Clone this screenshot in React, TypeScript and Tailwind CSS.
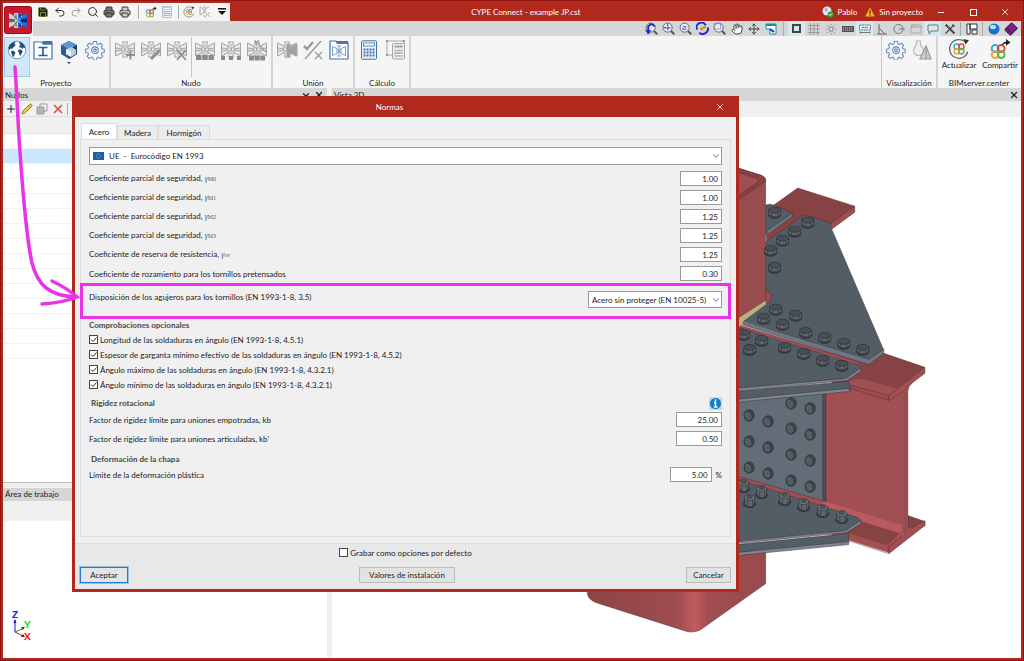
import type { ReactNode } from "react";
import {
  AppWindow,
  Book,
  ChevronDown,
  Hand,
  Move,
  Pencil,
  Plus,
  Printer,
  Redo2,
  Save,
  Search,
  Undo2,
  X,
} from "lucide-react";

type IconProps = { className?: string };

// ---------- Icons ----------

// Bolted joint: two flared beams meeting at a column
function Joint({ children, color = "#a6a6a6" }: { children?: ReactNode; color?: string }) {
  return (
    <svg viewBox="0 0 22 22" className="size-[22px]" fill="none" stroke={color} strokeWidth="1">
      <path d="M8 2h6M9 2v4M13 2v4M8 17h6M9 13v4M13 13v4" />
      <path d="M1.500 3L8 6v7l-6.500 3zM20.500 3L14 6v7l6.500 3zM1.500 8L8 9M1.500 11L8 10M20.500 8L14 9M20.500 11L14 10" fill="#e6e6e6" />
      <path d="M8 6l6 7M14 6l-6 7M11 4v11" />
      {children}
    </svg>
  );
}

function Gear({ className = "size-5" }: IconProps) {
  return (
    <svg viewBox="0 0 24 24" className={className} fill="none" stroke="#5f89b8" strokeWidth="1.300" strokeLinejoin="round">
      <path d="M10 1.500h4l.6 3 1.900.8 2.600-1.800 2.800 2.800-1.800 2.600.8 1.900 3 .6v4l-3 .6-.8 1.900 1.800 2.600-2.800 2.800-2.600-1.800-1.900.8-.6 3h-4l-.6-3-1.900-.8-2.600 1.800-2.800-2.800 1.800-2.600-.8-1.900-3-.6v-4l3-.6.8-1.900-1.800-2.600 2.800-2.800 2.600 1.800 1.900-.8z" transform="translate(.6 .4) scale(.94)" />
      <circle cx="12" cy="12.200" r="4" />
      <circle cx="12" cy="12.200" r="1.600" />
    </svg>
  );
}

function Globe() {
  return (
    <svg viewBox="0 0 20 20" className="size-5">
      <circle cx="10" cy="10" r="8.800" fill="#fff" stroke="#2a5a8c" strokeWidth=".6" />
      <path
        d="M1.500 8Q2.500 4 6 2.300L8.500 2 7.500 4 8.800 5.300 6.500 7 5.500 8.800 3.500 8.500 2.800 10.500zM4 10.800L6.500 10.800 8.500 12.500 7.500 14.500 7 17 5.500 16 4.500 13.500zM12 1.800Q15 2 17.300 5.200L18.300 8.500 16.500 7.500 15.500 9 14 7.500 12.500 7.500 12 6.200 13.500 5 12.500 3.500zM11.500 9.800L14 9.500 15.800 11.200 14.500 13.500 13.500 16 12.300 14.500 12 12.500 10.800 11.500z"
        fill="#1d4d7e"
      />
    </svg>
  );
}

function SectionWindow() {
  return (
    <svg viewBox="0 0 20 20" className="size-5" fill="none" stroke="#4274a8">
      <path d="M1 2h8l1 2h9v15H1z" fill="#fff" strokeWidth="1.200" />
      <path d="M10 1.500h9V4h-8.500z" fill="#4274a8" />
      <path d="M5.500 7.500h9M5.500 15.500h9M10 7.500v8" stroke="#2b5c90" strokeWidth="1.700" />
    </svg>
  );
}

function JointWindow() {
  return (
    <svg viewBox="0 0 20 20" className="size-5" fill="none" stroke="#7da0c6">
      <path d="M1 1h6l1 2h11v16H1z" fill="#fff" stroke="#4274a8" strokeWidth="1.200" />
      <path d="M7.500 1H19v3H8.500z" fill="#5d6f9c" stroke="none" />
      <path d="M3.500 6.500l4.500 2v5l-4.500 2zM16.500 6.500l-4.500 2v5l4.500 2zM8 6h4M8 16h4M10 6v10M8 8.500l4 5M12 8.500l-4 5" />
    </svg>
  );
}

function Cube() {
  return (
    <svg viewBox="0 0 20 20" className="size-5">
      <path d="M10 1l8 4v9l-8 5-8-5V5z" fill="#2a5c96" />
      <path d="M10 1l8 4-8 4-8-4z" fill="#5f97c9" />
      <path d="M10 9l8-4v9l-8 5z" fill="#1b3f6b" />
      <path d="M7 9l6-2 4 3v4l-5 3-5-3z" fill="#b9cfe0" />
      <path d="M7 9l5 2v6l-5-3z" fill="#e8f0f6" />
    </svg>
  );
}

function Calculator({ className = "size-5", color = "#4274a8" }: IconProps & { color?: string }) {
  return (
    <svg viewBox="0 0 20 20" className={className} fill="none" stroke={color}>
      <rect x="2.500" y=".8" width="15" height="18.400" rx="1" fill="#eef3f8" />
      <rect x="4.500" y="3" width="11" height="3" strokeWidth=".8" fill="#fff" />
      <path d="M4.500 9.500h11M4.500 12.500h11M4.500 15.500h11" strokeWidth="2" strokeDasharray="2 1" />
    </svg>
  );
}

function MeshCalculator() {
  return (
    <svg viewBox="0 0 20 20" className="size-5" fill="none" stroke="#a5a5a5">
      <path d="M2 1v15M1 1h18v3M2 15h5" />
      <path d="M1 0h2v2H1zM18 0h2v2h-2zM1 14h2v2H1z" fill="#999" stroke="none" />
      <rect x="7.500" y="3.500" width="12" height="15.500" rx="1" fill="#eee" />
      <path d="M9.500 6.500h8" strokeWidth="2" />
      <path d="M9.500 10.500h8M9.500 13.200h8M9.500 16h8" strokeWidth="1.700" strokeDasharray="1.700 .5" />
    </svg>
  );
}

// Four coloured rings of BIMserver.center
function Rings() {
  return (
    <g fill="none" strokeWidth="1.800">
      <circle cx="7.200" cy="7.200" r="3.200" stroke="#35a7d8" />
      <circle cx="12.800" cy="7.200" r="3.200" stroke="#e2453c" />
      <circle cx="7.200" cy="12.800" r="3.200" stroke="#f3a32c" />
      <circle cx="12.800" cy="12.800" r="3.200" stroke="#5bb450" />
    </g>
  );
}

function RingsIcon({ mode, className = "size-5" }: IconProps & { mode: "sync" | "share" }) {
  return (
    <svg viewBox="0 0 20 20" className={className}>
      {mode === "sync" ? (
        <>
          <path d="M15.500 3.500a8.500 8.500 0 1 0 2.500 9" fill="none" stroke="#666" strokeWidth="1.100" />
          <path d="M14 1l5 1-3 4z" fill="#333" />
          <g transform="translate(2.500 2.500) scale(.75)">
            <Rings />
          </g>
        </>
      ) : (
        <>
          <g transform="translate(-1.500 2.500) scale(.98)">
            <Rings />
          </g>
          <path d="M11.500 7q1-3.500 4-3.500V1l4 3-4 3V5q-2 0-4 2z" fill="#222" />
        </>
      )}
    </svg>
  );
}

function BulbCone() {
  return (
    <svg viewBox="0 0 20 20" className="size-5" fill="none" stroke="#b8b8b8" strokeWidth="1.200">
      <path d="M4.500 1h4v3.500l2.500 4a5 5 0 1 1-9 0l2.500-4z" fill="#f0f0f0" />
      <path d="M14 6L8 19h11z" fill="#d0d0d0" stroke="#999" />
      <path d="M14 6v13" stroke="#999" />
    </svg>
  );
}

function Magnifier({ children }: { children?: ReactNode }) {
  return (
    <svg viewBox="0 0 12 12" className="size-[13px]" fill="none" stroke="#555" strokeWidth=".8">
      <circle cx="5.200" cy="5.200" r="4.200" fill="#eeeefa" />
      <path d="M8.300 8.300l3 3" strokeWidth="1.800" />
      {children}
    </svg>
  );
}

function AppLogo() {
  return (
    <svg viewBox="0 0 28 28" className="size-7">
      <rect x=".5" y=".5" width="27" height="27" rx="2" fill="#c51a2d" stroke="#8e0e1c" />
      <path d="M5 7l5 3V7h4v15h-4v-3l-5 3z" fill="#d4d4d4" />
      <path d="M23 7l-5 3V7h-4v15h4v-3l5 3z" fill="#1d6fe0" />
      <path d="M5 12.500l6 .8v2.400l-6 .8z" fill="#666" />
      <path d="M23 12.500l-6 .8v2.400l6 .8z" fill="#0c1f66" />
      <path d="M10 10l4 4.500-4 4.500M12 8v5M12 17v4" stroke="#555" fill="none" />
      <path d="M18 10l-4 4.500 4 4.500" stroke="#9fe0ff" fill="none" />
      <path d="M16 8v4M16 17v4" stroke="#0c1f66" />
    </svg>
  );
}

// ---------- Small controls ----------

function Tool({ label, active, children }: { label: string; active?: boolean; children: ReactNode }) {
  return (
    <button
      aria-label={label}
      className={`flex h-[15px] w-[17px] items-center justify-center ${active ? "bg-[#d5e9f3]" : ""}`}
    >
      {children}
    </button>
  );
}

function Divider({ className = "mx-1" }: IconProps) {
  return <span className={`h-3.5 w-px bg-[#aaa] ${className}`} />;
}

function RibbonButton({ label, active, children }: { label: string; active?: boolean; children: ReactNode }) {
  return (
    <button
      aria-label={label}
      className={`flex h-10 w-[26px] flex-col items-center border pt-0.5 ${
        active ? "border-[#9ccbe6] bg-[#cde8f6]" : "border-transparent"
      }`}
    >
      {children}
    </button>
  );
}

function RibbonGroup({ title, children }: { title: string; children: ReactNode }) {
  return (
    <section className="flex flex-col justify-between border-r-2 border-[#d4d4d4] px-px pt-px">
      <div className="flex">{children}</div>
      <h2 className="text-center leading-2.5">{title}</h2>
    </section>
  );
}

// ---------- 3D view ----------

function Bolt({ x, y, nut }: { x: number; y: number; nut?: boolean }) {
  return (
    <g transform={`translate(${x} ${y})`} stroke="#2a2f34" strokeWidth=".6">
      <ellipse cy="2.500" rx="6.300" ry="3.600" fill="#3a4046" />
      <path d={nut ? "M-5-4v6l3 3h5l2-3v-6z" : "M-6-2v4l3 2.500h6l3-2.500v-4z"} fill="#60666c" />
      <path d={nut ? "M-2-3v8M3-3v8" : "M-3 0v4M3 0v4"} />
      <ellipse cy={nut ? -4 : -2} rx={nut ? 5 : 6} ry="3" fill={nut ? "#72787e" : "#484e53"} />
      {nut && <ellipse cy="-4.500" rx="2.800" ry="1.600" fill="#50565c" />}
    </g>
  );
}

function WebBolt({ x, y }: { x: number; y: number }) {
  return (
    <g transform={`translate(${x} ${y})`} stroke="#2c3136" strokeWidth=".6">
      <ellipse cx=".5" rx="5.200" ry="5.800" fill="#3e444a" />
      <path d="M-4.500-2.500l3-2 4 2 1 5-3 3-4-2z" fill="#565c62" />
    </g>
  );
}

const topBolts = [
  [774, 212], [807, 222], [794, 231], [782, 240], [770, 250], [774, 267],
  [775, 309], [795, 315], [763, 318], [782, 324], [805, 332], [824, 337], [843, 343], [862, 349],
];
const midBolts = [[743, 334], [761, 340], [749, 349], [784, 347], [803, 353], [822, 360], [841, 365]];
const webBolts = [
  [748, 415], [748, 441], [748, 467], [767, 421], [767, 447], [767, 473],
  [790, 403], [790, 428], [790, 454], [790, 480], [809, 408], [809, 434], [809, 460], [809, 486],
];
const lowBolts = [[743, 486], [761, 492], [749, 501], [784, 499], [803, 505], [822, 511], [841, 517]];

function Model() {
  return (
    <svg
      viewBox="332 117 688 539"
      preserveAspectRatio="xMaxYMin meet"
      className="size-full"
      stroke="#4a3033"
      strokeWidth=".5"
      role="img"
      aria-label="Vista 3D"
    >
      <defs>
        <linearGradient id="column">
          <stop offset="0" stopColor="#8f4446" />
          <stop offset=".5" stopColor="#9e4b4e" />
          <stop offset=".6" stopColor="#c05c5f" />
          <stop offset=".68" stopColor="#a04d50" />
          <stop offset="1" stopColor="#984a4c" />
        </linearGradient>
      </defs>
      <path d="M587 550h178v33l-65 46q-8 4-16 1l-88-28q-8-3-9-9z" fill="url(#column)" />

      {/* rear beam and its plates */}
      <path d="M797 188l57 18-24 18-64 18v-32z" fill="#874244" />
      <path d="M854 206v6l-23 17-2-5z" fill="#9f4d50" />
      <path d="M765 205q4-2 8 0l19 8v3l-27 18z" fill="#535d66" />
      <path d="M792 213v3l-26 19v-4z" fill="#6b7886" />
      <path d="M765 242l35-25q4-3 8-1l20 6 3 7 52 121-15 11-126-41 23-18z" fill="#535d66" />
      <path d="M765 290l6 5-1 5-5 4z" fill="#9f4d50" />
      <path d="M735 323l4 2 129 39 15-11 41 14-36 28-160-40z" fill="#874244" />
      <path d="M743 321l125 38 15-10v4l-15 11-125-39z" fill="#6b7886" />

      {/* column */}
      <path d="M730 165l30 10q5 2 5 6v120l-35 26z" fill="#9a4d4f" stroke="none" />
      <path d="M730 166l30 9q6 2 5 6l-35 24z" fill="#874244" />
      <path d="M730 170l26 8q3 2 0 5l-26 18z" fill="#9f4d50" />
      <path d="M765 180v122" />
      <path d="M765 300l1 4-23 17-1 5-8 3v-9z" fill="#b9b082" />

      {/* front beam */}
      <path d="M822 388l37-10 45 12v142l-16 14-66-46z" fill="#a14f52" stroke="none" />
      <path d="M907 515l17 6v4l-17 7z" fill="#874244" />
      <path d="M834 381l54 14v5l-57-18z" fill="#9f4d50" />
      <path d="M735 472l125 39 44 16-4 14-12 11-58-18-95-30z" fill="#a34f52" stroke="none" />
      <path d="M855 516l44 16-12 13-42-13z" fill="#874244" stroke="none" />
      <path d="M822 500l80 25-2 8-78-24z" fill="#b95b5d" stroke="none" />
      <path
        d="M888 395l36-28v6l-12 9q-5 4-5 9v133q0 5 4 3l13-7v5l-36 28v-7l12-9q4-4 4-8V394q0-4-3-2l-13 8z"
        fill="#a34f52"
      />
      <path d="M832 535l56 18" />

      {/* middle plates */}
      <path d="M735 401l90-9v109l-90-26z" fill="#626d77" />
      <path d="M822 393l3 0v108l-3-1z" fill="#465260" />
      <path d="M735 391l113-10 2 9-115 11z" fill="#535d66" />
      <path d="M735 399l113-11 1 3-114 11z" fill="#7a8796" />
      <path d="M735 326l122 38q3 2 3 5l-14 9-111 11z" fill="#535d66" />
      <path d="M735 388l110-10 15-10v3l-14 9-111 11z" fill="#7a8796" />
      <path d="M739 326l118 37" stroke="#a34f52" strokeWidth="2" />

      {/* lower plates */}
      <path d="M735 544l113-11v9l-113 10z" fill="#535d66" />
      <path d="M735 552l113-11v3l-113 11z" fill="#7a8796" />
      <path d="M735 478l122 39q3 2 3 4l-14 9-111 11z" fill="#535d66" />
      <path d="M735 541l110-11 15-10v3l-14 9-111 11z" fill="#7a8796" />

      {topBolts.map(([x, y]) => (
        <Bolt key={`${x}-${y}`} x={x} y={y} />
      ))}
      {midBolts.map(([x, y]) => (
        <Bolt key={`${x}-${y}`} x={x} y={y} />
      ))}
      {webBolts.map(([x, y]) => (
        <WebBolt key={`${x}-${y}`} x={x} y={y} />
      ))}
      {lowBolts.map(([x, y]) => (
        <Bolt key={`${x}-${y}`} x={x} y={y} nut />
      ))}
    </svg>
  );
}

// ---------- Window header ----------

function TitleBar() {
  return (
    <div className="flex h-[18px] items-center bg-[#b1281c] text-white">
      <div className="flex h-full w-[197px] items-center bg-[#f5f5f5] pl-0.5 text-[#333]">
        <Tool label="Guardar"><Save className="size-3 fill-[#222] stroke-[#7f9440]" /></Tool>
        <Tool label="Deshacer"><Undo2 className="size-3" /></Tool>
        <Tool label="Rehacer"><Redo2 className="size-3 text-[#999]" /></Tool>
        <Tool label="Buscar"><Search className="size-3" /></Tool>
        <Tool label="Imprimir"><Printer className="size-3 fill-[#777]" /></Tool>
        <Tool label="Configurar impresión"><Printer className="size-3 fill-[#ccc]" /></Tool>
        <Divider />
        <Tool label="BIMserver"><RingsIcon mode="share" className="size-3" /></Tool>
        <Tool label="Calcular"><Calculator className="size-3" color="#7f9dbf" /></Tool>
        <Divider className="mx-0.5" />
        <Tool label="Actualizar"><RingsIcon mode="sync" className="size-3" /></Tool>
        <Tool label="Eliminar nudo">
          <svg viewBox="0 0 12 12" className="size-3" fill="none" stroke="#aaa">
            <path d="M1 1l4 2v4l-4 2zM10 1L6 3v4M4 1h3M4 10h2M6 6l5 5M11 6l-5 5" />
          </svg>
        </Tool>
        <Tool label="Más opciones">
          <svg viewBox="0 0 10 10" className="size-2.5" fill="#111">
            <path d="M1 1h8v1.500H1zM1 4h8L5 8z" />
          </svg>
        </Tool>
      </div>
      <h1 className="flex-1 text-center">CYPE Connect - example JP.cst</h1>
      <div className="flex items-center gap-1">
        <svg viewBox="0 0 12 12" className="size-3">
          <circle cx="5" cy="5" r="4.500" fill="#dfe9e8" />
          <path d="M2 3l3-1 1 2-2 2z" fill="#8fb7cf" />
          <circle cx="8.500" cy="8.500" r="3" fill="#35a547" />
          <path d="M7 8.500l1 1 2-2" stroke="#fff" fill="none" />
        </svg>
        <span>Pablo</span>
        <svg viewBox="0 0 12 12" className="ml-1 size-2.5">
          <path d="M6 .5L11.700 11.500H.3z" fill="#f8b51c" />
          <path d="M6 4v4M6 9v1.500" stroke="#222" strokeWidth="1.300" />
        </svg>
        <span>Sin proyecto</span>
      </div>
      <div className="ml-0.5 flex">
        <button aria-label="Minimizar" className="flex w-8 items-center justify-center">
          <span className="h-px w-1.5 bg-white" />
        </button>
        <button aria-label="Maximizar" className="flex w-8 items-center justify-center">
          <span className="size-[7px] border border-white" />
        </button>
        <button aria-label="Cerrar" className="flex w-8 items-center justify-center">
          <X className="size-2.5" />
        </button>
      </div>
    </div>
  );
}

function ViewTools() {
  return (
    <div className="flex h-[15px] items-center justify-end bg-[#d6d6d6] pr-0.5 text-[#444]">
      <Tool label="Zoom anterior">
        <Magnifier><path d="M3 11V4q3-4 6 0" stroke="#1a28e0" strokeWidth="1.800" /><path d="M0 7.500h6L3 11z" fill="#1a28e0" stroke="none" /></Magnifier>
      </Tool>
      <Tool label="Zoom total"><Magnifier><path d="M5.200 2v6.400M2 5.200h6.400" stroke="#3a46e0" strokeWidth="1.400" strokeDasharray="2 1" /></Magnifier></Tool>
      <Tool label="Zoom doble"><Magnifier><path d="M3.500 4h3v1.500h-3V7h3.500" stroke="#5a5ae0" /></Magnifier></Tool>
      <Tool label="Redibujar">
        <svg viewBox="0 0 12 12" className="size-[13px]" fill="none">
          <path d="M1 7a4 4 0 0 1 8-4M11 5a5 5 0 0 1-8 5" stroke="#1a28e0" strokeWidth="1.800" />
          <path d="M3 6l5-3 2 2-5 3z" fill="#d89a3c" />
        </svg>
      </Tool>
      <Tool label="Zoom ventana"><Magnifier><path d="M1 1.500h6v5H1z" stroke="#7c8fd8" /></Magnifier></Tool>
      <Tool label="Desplazar"><Hand className="size-3 fill-white" /></Tool>
      <Tool label="Orbitar"><Move className="size-3" /></Tool>
      <Tool label="Ventana">
        <svg viewBox="0 0 12 12" className="size-3" fill="#fff" stroke="#168fa0">
          <path d="M1 1h10v10H5V6H1z" />
          <path d="M1 2h10" strokeWidth="2" />
          <path d="M5 6l4 3" stroke="#1a28e0" strokeWidth="2" />
        </svg>
      </Tool>
      <Divider />
      <Tool label="Vista plana" active><span className="size-[9px] border-2 border-[#444]" /></Tool>
      <Tool label="Rejilla">
        <svg viewBox="0 0 12 12" className="size-3" stroke="#999">
          <path d="M2.500 0v12M6 0v12M9.500 0v12M0 2.500h12M0 6h12M0 9.500h12" />
        </svg>
      </Tool>
      <Tool label="Referencias">
        <svg viewBox="0 0 12 12" className="size-3" fill="none" stroke="#888"><path d="M4 4h4v4H4zM6 1v1M6 10v1M1 6h1M10 6h1M2 2l1 1M9 9l1 1M10 2L9 3M3 9l-1 1" /></svg>
      </Tool>
      <Tool label="Teclado">
        <svg viewBox="0 0 12 12" className="size-3"><path d="M0 3h12v6H0z" fill="#555" /><path d="M1 5h10M1 7h10" stroke="#ccc" strokeDasharray="1 1" /></svg>
      </Tool>
      <Tool label="Acotar" active>
        <svg viewBox="0 0 12 12" className="size-3" fill="none" stroke="#777"><path d="M.5 2h11v5H.5zM3 4.500h6" strokeDasharray="2 .6" /><path d="M1 9.500h10M1 8.500v2M11 8.500v2" /></svg>
      </Tool>
      <Tool label="Ángulo">
        <svg viewBox="0 0 12 12" className="size-3" fill="none" stroke="#666"><path d="M3 1v10h8M3 5l6 6M1 11h2" /></svg>
      </Tool>
      <Tool label="Radio">
        <svg viewBox="0 0 12 12" className="size-3" fill="none" stroke="#777"><circle cx="5.500" cy="6" r="4.500" /><path d="M5.500 6H12" /></svg>
      </Tool>
      <Tool label="Capas"><AppWindow className="size-3 text-[#aaa]" /></Tool>
      <Tool label="Etiquetas" active>
        <svg viewBox="0 0 12 12" className="size-3" fill="none" stroke="#777"><path d="M1 2h10v6H4l-2 3V8H1z" /></svg>
      </Tool>
      <Tool label="Herramientas">
        <svg viewBox="0 0 12 12" className="size-3" fill="none" stroke="#444"><path d="M2 2l8.500 8.500" strokeWidth="1.800" /><path d="M10 2L1.500 10.500" strokeWidth="1.200" /><path d="M1 3l2-2M9 1v2h2" /></svg>
      </Tool>
      <Divider className="mx-0.5" />
      <Tool label="Distribución">
        <svg viewBox="0 0 12 12" className="size-3" fill="#fff" stroke="#333"><path d="M1 1h3v10H1zM4 1h7v5H4zM6 7h5v4H6z" /></svg>
      </Tool>
      <Divider className="mx-0.5" />
      <Tool label="Web">
        <svg viewBox="0 0 12 12" className="size-3"><circle cx="6" cy="6" r="5.500" fill="#1670c8" /><ellipse cx="5" cy="4" rx="3" ry="2.200" fill="#a8e4ff" /></svg>
      </Tool>
      <Tool label="Ayuda"><Book className="size-3 rotate-45 fill-[#7b2580] stroke-[#4b154f]" /></Tool>
    </div>
  );
}

function Ribbon() {
  return (
    <div className="flex h-[52px] bg-[#f5f5f5]">
      <RibbonGroup title="Proyecto">
        <RibbonButton label="Normas" active><Globe /></RibbonButton>
        <RibbonButton label="Perfiles"><SectionWindow /></RibbonButton>
        <RibbonButton label="Materiales">
          <Cube />
          <svg viewBox="0 0 6 4" className="mt-px h-1 w-1.5"><path d="M1 1h4L3 3z" fill="#444" /></svg>
        </RibbonButton>
        <RibbonButton label="Opciones"><Gear /></RibbonButton>
      </RibbonGroup>
      <RibbonGroup title="Nudo">
        <RibbonButton label="Añadir nudo"><Joint><path d="M12 15h9M16.500 10.500v9" stroke="#8f8f8f" strokeWidth="2" /></Joint></RibbonButton>
        <RibbonButton label="Editar nudo"><Joint><path d="M11 19l9-9" stroke="#8f8f8f" strokeWidth="3" /></Joint></RibbonButton>
        <RibbonButton label="Borrar nudo"><Joint><path d="M11 10l9 10M20 10l-9 10" stroke="#8f8f8f" strokeWidth="1.800" /></Joint></RibbonButton>
        <span className="w-0.5 border-r border-[#c4c4c4]" />
        <RibbonButton label="Barras"><Joint><path d="M2 17.500h18" stroke="#8a8a8a" strokeWidth="5" strokeDasharray="5.500 .7" /></Joint></RibbonButton>
        <RibbonButton label="Distribuir barras"><Joint><path d="M1 18h20" stroke="#8a8a8a" strokeWidth="4" strokeDasharray="4 4" /></Joint></RibbonButton>
        <RibbonButton label="Generar"><Joint><path d="M3 18h16" stroke="#8a8a8a" strokeWidth="5" strokeDasharray="5 .6" /><path d="M11 2l9 10M9 0l2 5M13 0l-4 3" stroke="#8f8f8f" /></Joint></RibbonButton>
      </RibbonGroup>
      <RibbonGroup title="Unión">
        <RibbonButton label="Unión"><Joint><path d="M11 4h3v3l7-3v12l-7-3v4h-3z" fill="#a2a2a2" /></Joint></RibbonButton>
        <RibbonButton label="Comprobar">
          <svg viewBox="0 0 20 20" className="size-5" fill="none" stroke="#9a9a9a">
            <path d="M1 6l3 3 6-7" strokeWidth="2.500" />
            <path d="M18 1L2 19M12 12l7 7M19 12l-7 7" strokeWidth="1.400" />
          </svg>
        </RibbonButton>
        <RibbonButton label="Biblioteca"><JointWindow /></RibbonButton>
      </RibbonGroup>
      <RibbonGroup title="Cálculo">
        <RibbonButton label="Calcular"><Calculator /></RibbonButton>
        <RibbonButton label="Malla"><MeshCalculator /></RibbonButton>
      </RibbonGroup>
      <div className="flex-1 border-r border-[#c8c8c8]" />
      <RibbonGroup title="Visualización">
        <RibbonButton label="Ajustes de visualización"><Gear /></RibbonButton>
        <RibbonButton label="Iluminación"><BulbCone /></RibbonButton>
      </RibbonGroup>
      <section className="flex flex-col justify-between pt-0.5 pr-px">
        <div className="flex">
          <button className="flex w-[42px] flex-col items-center">
            <RingsIcon mode="sync" className="size-[22px]" />
            <span className="leading-2.5">Actualizar</span>
          </button>
          <button className="flex w-10 flex-col items-center">
            <RingsIcon mode="share" className="size-[22px]" />
            <span className="leading-2.5">Compartir</span>
          </button>
        </div>
        <h2 className="text-center leading-2.5">BIMserver.center</h2>
      </section>
    </div>
  );
}

// ---------- Left side ----------

function Axes() {
  return (
    <svg viewBox="0 0 24 36" className="h-9 w-6" fill="none">
      <path d="M5 24V12" stroke="#1414d8" />
      <path d="M5 11l-1.500 4h3z" fill="#1414d8" />
      <path d="M5 24l9-4" stroke="#2d8a2d" />
      <path d="M15 19l-4 0 2 3z" fill="#145c14" />
      <path d="M5 24l8 4" stroke="#a02020" />
      <path d="M15 29l-4 0 2-3z" fill="#701010" />
      <g className="text-[10px] font-black">
        <text x="2" y="10" fill="#2222e6">Z</text>
        <text x="14" y="20" fill="#18dd18">Y</text>
        <text x="14" y="32" fill="#ee1c1c">X</text>
      </g>
    </svg>
  );
}

function Sidebar() {
  return (
    <aside className="flex w-[324px] flex-col">
      <header className="flex h-[13px] items-center bg-[#d6d6d6] pl-0.5">
        <h2 className="flex-1">Nudos</h2>
        <button aria-label="Contraer" className="w-[13px]"><ChevronDown className="size-2.5 stroke-3" /></button>
        <button aria-label="Cerrar panel" className="w-[13px]"><X className="size-2.5 stroke-3" /></button>
      </header>
      <div className="flex h-4 items-center border-b border-[#ddd] bg-[#f0f0f0]">
        <button aria-label="Añadir" className="flex w-4 justify-center"><Plus className="size-3" /></button>
        <button aria-label="Editar" className="flex w-[15px] justify-center"><Pencil className="size-3 fill-[#f0cc3c] stroke-[#8c7a34]" /></button>
        <button aria-label="Copiar" className="flex w-4 justify-center">
          <svg viewBox="0 0 12 12" className="size-3" fill="#f4f4f4" stroke="#999"><path d="M4 1h7v7H4z" /><path d="M1 4h7v7H1z" fill="#b5b5b5" /></svg>
        </button>
        <button aria-label="Borrar" className="flex w-[15px] justify-center"><X className="size-3.5 stroke-3 text-[#d9534a]" /></button>
        <span className="ml-0.5 h-3 w-px bg-[#aaa]" />
      </div>
      <div className="h-[17px] border-b border-[#e4e4e4] bg-[#f0f0f0]" />
      <ul className="flex-1 border-b border-[#bbb]">
        {Array.from({ length: 15 }, (_, i) => (
          <li key={i} className={`h-[15px] border-b border-[#f3f3f3] ${i === 1 ? "bg-[#cce8ff]" : ""}`} />
        ))}
      </ul>
      <div className="h-[5px] bg-[#f0f0f0]" />
      <section className="flex h-[170px] flex-col">
        <h2 className="bg-[#d6d6d6] pl-0.5 leading-[13px]">Área de trabajo</h2>
        <div className="h-5 bg-[#f0f0f0]" />
        <div className="flex flex-1 items-end pb-3.5 pl-[7px]">
          <Axes />
        </div>
      </section>
    </aside>
  );
}

// ---------- Standards dialog ----------

function NumberField({ id, label, value, width = "w-[42px]" }: { id: string; label: ReactNode; value: string; width?: string }) {
  return (
    <div className="flex h-[15px] items-center justify-between">
      <label htmlFor={id}>{label}</label>
      <input
        id={id}
        defaultValue={value}
        className={`h-[15px] border border-[#999] bg-white pr-[3px] text-right ${width}`}
      />
    </div>
  );
}

function Check({ label, checked }: { label: string; checked?: boolean }) {
  return (
    <label className="flex h-[15px] items-center gap-0.5">
      <span className="relative flex size-[9px]">
        <input type="checkbox" defaultChecked={checked} className="peer size-[9px] appearance-none border border-[#444] bg-white" />
        <svg viewBox="0 0 9 9" className="pointer-events-none absolute inset-0 hidden size-[9px] peer-checked:block" fill="none" stroke="#333">
          <path d="M2 4.500l2 2 3.500-4" />
        </svg>
      </span>
      {label}
    </label>
  );
}

function Heading({ children }: { children: ReactNode }) {
  return <h3 className="leading-[13px] font-black text-[#555]">{children}</h3>;
}

function Gamma({ sub }: { sub: string }) {
  return (
    <span className="font-['Liberation_Serif',serif] text-[#555]">
      <i>γ</i>
      <span className="text-[6px]">{sub}</span>
    </span>
  );
}

const safetyFactors = [
  { id: "m0", text: "Coeficiente parcial de seguridad,", sub: "M0", value: "1.00" },
  { id: "m1", text: "Coeficiente parcial de seguridad,", sub: "M1", value: "1.00" },
  { id: "m2", text: "Coeficiente parcial de seguridad,", sub: "M2", value: "1.25" },
  { id: "m3", text: "Coeficiente parcial de seguridad,", sub: "M3", value: "1.25" },
  { id: "ov", text: "Coeficiente de reserva de resistencia,", sub: "ov", value: "1.25" },
];

const optionalChecks = [
  "Longitud de las soldaduras en ángulo (EN 1993-1-8, 4.5.1)",
  "Espesor de garganta mínimo efectivo de las soldaduras en ángulo (EN 1993-1-8, 4.5.2)",
  "Ángulo máximo de las soldaduras en ángulo (EN 1993-1-8, 4.3.2.1)",
  "Ángulo mínimo de las soldaduras en ángulo (EN 1993-1-8, 4.3.2.1)",
];

function SteelTab() {
  return (
    <div role="tabpanel" className="flex-1 border border-[#dcdcdc] px-2 pt-[7px]">
      <div className="relative">
        <select aria-label="Norma" className="block h-[18px] w-full appearance-none border border-[#999] bg-white pl-[19px]">
          <option>UE&nbsp; -&nbsp; Eurocódigo EN 1993</option>
        </select>
        <svg viewBox="0 0 11 8" className="pointer-events-none absolute top-[5px] left-1 h-2 w-[11px]">
          <path d="M0 0h11v8H0z" fill="#1f5aa8" />
          <circle cx="5.500" cy="4" r="2.300" fill="none" stroke="#9fc3ae" strokeWidth=".8" strokeDasharray=".8 .6" />
        </svg>
        <ChevronDown className="pointer-events-none absolute top-1 right-px size-2.5 text-[#555]" />
      </div>

      <div className="mt-1.5 space-y-1">
        {safetyFactors.map((f) => (
          <NumberField key={f.id} id={f.id} value={f.value} label={<>{f.text} <Gamma sub={f.sub} /></>} />
        ))}
        <NumberField id="friction" label="Coeficiente de rozamiento para los tornillos pretensados" value="0.30" />
      </div>

      <div className="-mx-[9px] mt-0.5 flex h-9 items-start justify-between border-3 border-[#e833e8] px-1.5 pt-[5px]">
        <label htmlFor="holes">Disposición de los agujeros para los tornillos (EN 1993-1-8, 3.5)</label>
        <div className="relative">
          <select id="holes" className="block h-[17px] w-[134px] appearance-none border border-[#999] bg-white pl-[3px]">
            <option>Acero sin proteger (EN 10025-5)</option>
          </select>
          <ChevronDown className="pointer-events-none absolute top-1 right-px size-2.5 text-[#555]" />
        </div>
      </div>

      <Heading>Comprobaciones opcionales</Heading>
      {optionalChecks.map((text) => (
        <Check key={text} label={text} checked />
      ))}

      <div className="mt-[5px] flex items-center justify-between pl-0.5">
        <Heading>Rigidez rotacional</Heading>
        <button aria-label="Información" className="bg-[#d5d5d5]">
          <svg viewBox="0 0 13 13" className="size-[13px]">
            <circle cx="6.500" cy="6.500" r="5.600" fill="#0b82cf" />
            <path d="M6.500 2.500v2M5 5.500h1.500v4M5 10h3.500" stroke="#fff" strokeWidth="1.500" fill="none" />
          </svg>
        </button>
      </div>
      <div className="mt-0.5 space-y-1">
        <NumberField id="kb" label="Factor de rigidez límite para uniones empotradas, kb" value="25.00" width="w-[46px]" />
        <NumberField id="kb2" label="Factor de rigidez límite para uniones articuladas, kb'" value="0.50" width="w-[46px]" />
      </div>

      <div className="mt-[7px] pl-0.5">
        <Heading>Deformación de la chapa</Heading>
      </div>
      <div className="mt-px flex items-center gap-1">
        <div className="flex-1">
          <NumberField id="strain" label="Límite de la deformación plástica" value="5.00" />
        </div>
        <span>%</span>
      </div>
    </div>
  );
}

function StandardsDialog() {
  return (
    <div
      role="dialog"
      aria-label="Normas"
      className="absolute top-[95px] right-[284px] left-[71px] flex h-[496px] flex-col border-3 border-t-0 border-[#b1281c] bg-[#f0f0f0]"
    >
      <header className="flex h-[21px] shrink-0 items-center bg-[#b1281c] text-white">
        <h2 className="flex-1 text-center">Normas</h2>
        <button aria-label="Cerrar diálogo" className="flex w-8 justify-center"><X className="size-2.5" /></button>
      </header>
      <div className="flex flex-1 flex-col px-[5px] pt-1.5 pb-1.5">
        <div role="tablist" className="flex items-end pl-px">
          <button role="tab" aria-selected="true" className="h-4 w-9 border border-b-0 border-[#dcdcdc] bg-white">Acero</button>
          <button role="tab" className="h-3.5 w-[41px] border border-b-0 border-[#dcdcdc] bg-[#ececec]">Madera</button>
          <button role="tab" className="h-3.5 w-[52px] border border-b-0 border-[#dcdcdc] bg-[#ececec]">Hormigón</button>
        </div>
        <SteelTab />
      </div>
      <footer className="border-t border-[#dcdcdc] bg-[#e8e8e8] px-[5px] pt-px pb-1.5">
        <div className="flex justify-center">
          <Check label="Grabar como opciones por defecto" />
        </div>
        <div className="mt-[7px] flex justify-between">
          <button className="h-4 w-12 border border-[#1a7fd6] bg-[#e4e4e4] outline outline-[#1a7fd6]/40">Aceptar</button>
          <button className="h-4 w-24 border border-[#bbb] bg-[#e2e2e2]">Valores de instalación</button>
          <button className="h-4 w-[45px] border border-[#bbb] bg-[#e2e2e2]">Cancelar</button>
        </div>
      </footer>
    </div>
  );
}

// Hand drawn arrow from the ribbon button to the highlighted row
function Arrow() {
  return (
    <svg
      viewBox="0 0 90 320"
      className="pointer-events-none absolute top-0 left-0 h-80 w-[90px]"
      fill="none"
      stroke="#e833e8"
      strokeWidth="3.500"
      strokeLinecap="round"
    >
      <path d="M14 66C16 94 17 124 19 151C22 194 25 235 31 262C37 285 49 295 75 296" />
      <path d="M51 280Q66 287 76 296Q61 302 41 303" />
    </svg>
  );
}

export default function App() {
  return (
    <div className="relative h-screen overflow-hidden border border-[#92130f] bg-white font-['Lato','Open_Sans',sans-serif] text-[8px] text-[#222]">
      <div className="flex h-full flex-col border-2 border-[#b1281c]">
        <div className="flex">
          <div className="flex w-[30px] items-center justify-center bg-[#f5f5f5]">
            <AppLogo />
          </div>
          <div className="min-w-0 flex-1">
            <TitleBar />
            <ViewTools />
          </div>
        </div>
        <Ribbon />
        <main className="flex min-h-0 flex-1">
          <Sidebar />
          <div className="w-[5px] bg-[#f0f0f0]" />
          <section className="flex min-w-0 flex-1 flex-col">
            <header className="flex h-[13px] items-center justify-between bg-[#d6d6d6] px-0.5">
              <h2>Vista 3D</h2>
              <button aria-label="Cerrar vista"><X className="size-2.5 stroke-3" /></button>
            </header>
            <div className="h-4 bg-[#f0f0f0]" />
            <div className="min-h-0 flex-1">
              <Model />
            </div>
          </section>
        </main>
      </div>
      <StandardsDialog />
      <Arrow />
    </div>
  );
}
